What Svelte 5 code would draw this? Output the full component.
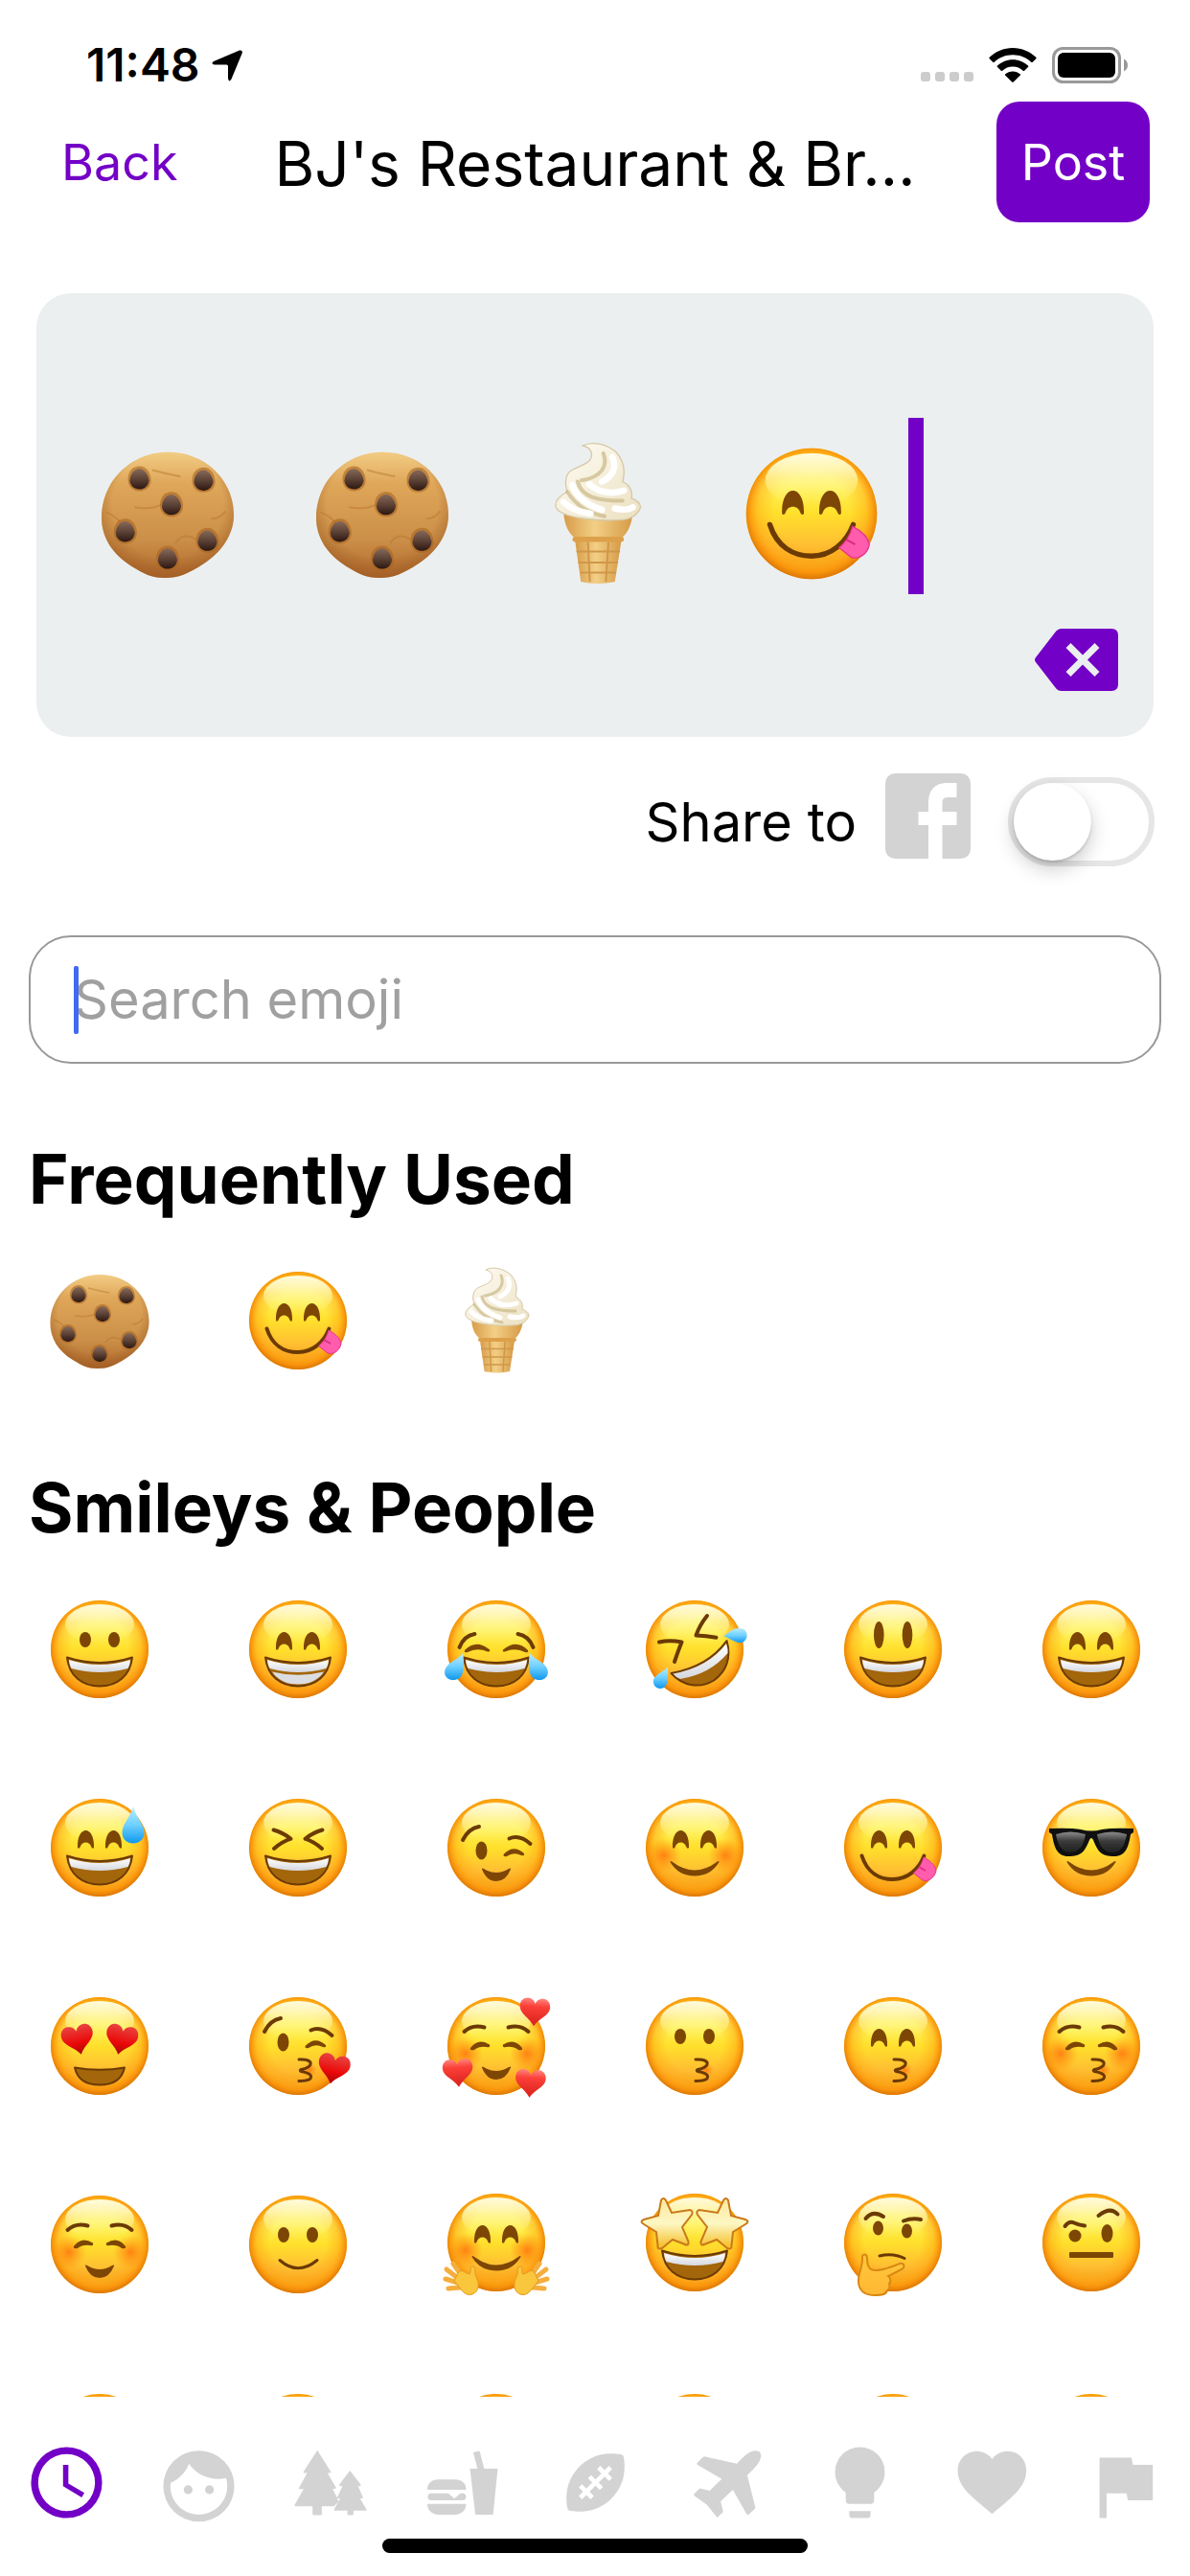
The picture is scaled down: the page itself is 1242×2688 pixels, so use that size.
<script>
	let message = $state(["cookie", "cookie", "icecream", "yum"]);
	let shareToFacebook = $state(false);
	let search = $state("");
	let activeTab = $state("Recent");

	// eyes, mouth, brows and extras pick the parts that the face snippet draws
	const faces = {
		grinning: { eyes: "dots", mouth: "grin" },
		beaming: { eyes: "arches", mouth: "teeth" },
		joy: { eyes: "joy", mouth: "grin", extra: "tears" },
		rofl: { eyes: "rofl", mouth: "rofl", extra: "roflTears" },
		smiley: { eyes: "tall", mouth: "grin" },
		smile: { eyes: "arches", mouth: "grin" },
		sweat: { eyes: "arches", mouth: "grin", extra: "drop" },
		laughing: { eyes: "squint", mouth: "grin" },
		wink: { eyes: "wink", mouth: "small" },
		blush: { eyes: "arches", mouth: "smile", cheeks: true },
		yum: { eyes: "arches", mouth: "yum" },
		sunglasses: { eyes: "glasses", mouth: "smile" },
		heartEyes: { eyes: "hearts", mouth: "open" },
		kissHeart: { eyes: "wink", lift: -7, mouth: "kiss", extra: "heart" },
		threeHearts: { eyes: "closed", mouth: "small", cheeks: true, extra: "hearts" },
		kissing: { eyes: "dots", mouth: "kiss" },
		kissingSmile: { eyes: "arches", mouth: "kiss" },
		kissingClosed: { eyes: "closed", mouth: "kiss", cheeks: true },
		relaxed: { eyes: "closed", mouth: "small", cheeks: true },
		slightSmile: { eyes: "dots", mouth: "slight" },
		hugging: { eyes: "arches", mouth: "smile", cheeks: true, up: 2, extra: "hands" },
		starStruck: { eyes: "none", mouth: "grin", up: 2, extra: "stars" },
		thinking: { eyes: "thinking", mouth: "doubt", up: 2, extra: "chin" },
		raisedBrow: { eyes: "raised", mouth: "flat", up: 2 },
		neutral: { eyes: "dots", mouth: "flat" },
		expressionless: { eyes: "closed", mouth: "flat" },
		rollingEyes: { eyes: "tall", mouth: "flat" },
		smirking: { eyes: "dots", mouth: "slight" },
		persevere: { eyes: "squint", mouth: "flat" },
		relieved: { eyes: "closed", mouth: "slight" },
	};

	const sections = [
		{ title: "Frequently Used", items: ["cookie", "yum", "icecream"] },
		{ title: "Smileys & People", items: Object.keys(faces) },
	];

	const tabs = [
		{
			name: "Recent",
			path: "M12 20A8 8 0 0 0 20 12 8 8 0 0 0 12 4 8 8 0 0 0 4 12 8 8 0 0 0 12 20M12 2A10 10 0 0 1 22 12 10 10 0 0 1 12 22C6.47 22 2 17.5 2 12A10 10 0 0 1 12 2M12.5 7V12.25L17 14.92L16.25 16.15L11 13V7H12.5Z",
		},
		{
			name: "Smileys",
			path: "M9 12.75A1.25 1.25 0 0 0 7.75 14A1.25 1.25 0 0 0 9 15.25A1.25 1.25 0 0 0 10.25 14A1.25 1.25 0 0 0 9 12.75M15 12.75A1.25 1.25 0 0 0 13.75 14A1.25 1.25 0 0 0 15 15.25A1.25 1.25 0 0 0 16.25 14A1.25 1.25 0 0 0 15 12.75M12 3A10 10 0 0 0 2 13A10 10 0 0 0 12 23A10 10 0 0 0 22 13A10 10 0 0 0 12 3M12 21C7.59 21 4 17.41 4 13C4 12.71 4 12.42 4.05 12.14C6.41 11.09 8.28 9.16 9.26 6.77C11.07 9.33 14.05 11 17.42 11C18.2 11 18.95 10.91 19.67 10.74C19.88 11.45 20 12.21 20 13C20 17.41 16.41 21 12 21Z",
		},
		{
			name: "Nature",
			path: "M8.14 2.9L12 9Q12.1 9.4 11 9.3L13.4 13.4Q13.5 13.8 12.4 13.8L14 16.7L13.6 16.9L14.4 17.1L12.8 18.7H9.4V20.9Q9.4 21.2 9.1 21.2H7.1Q6.8 21.2 6.8 20.9V18.7H1.9Q1.6 18.6 1.8 18.2L4.3 13.8H3.1Q2.8 13.7 3 13.4L5.3 9.3H4.4Q4.1 9.2 4.3 8.9ZM17.33 8.6L20.4 12.6Q20.5 13 19.6 13L21 16.2Q21.1 16.5 20.2 16.5L22 19.6Q22.1 19.9 21.8 19.9H18.3V20.9Q18.3 21.2 18 21.2H16.9Q16.6 21.2 16.6 20.9V19.9H13Q12.7 19.8 12.9 19.4L14.6 16.5Q13.6 16.5 13.8 16.1L15.2 13Q14.1 13 14.3 12.6Z",
		},
		{
			name: "Food",
			path: "M1.9 14V13.8C1.9 12.2 3.2 11.1 5 11.1H9.7C11.5 11.1 12.8 12.2 12.8 13.8V14ZM3 15H7.8L9.5 16.5L11.2 15H11.8A1 1 0 0 1 11.8 17H3A1 1 0 0 1 3 15ZM1.9 18H12.8C12.8 19.8 11.5 21 9.7 21H5C3.2 21 1.9 19.8 1.9 18ZM13.9 8.1H16L14.8 3.5L16.6 3.1L17.9 8.1H21.7L20.4 21H15.4Z",
		},
		{
			name: "Activity",
			path: "M7.5 7.5C9.17 5.87 11.29 4.69 13.37 4.18C15.46 3.67 17.5 3.83 18.6 4C19.71 4.15 19.87 4.31 20.03 5.41C20.18 6.5 20.33 8.55 19.82 10.63C19.31 12.71 18.13 14.83 16.5 16.5C14.83 18.13 12.71 19.31 10.63 19.82C8.55 20.33 6.5 20.18 5.41 20.03C4.31 19.87 4.15 19.71 4 18.6C3.83 17.5 3.67 15.46 4.18 13.37C4.69 11.29 5.87 9.17 7.5 7.5M7.3 15.79L8.21 16.7L9.42 15.5L10.63 16.7L11.54 15.79L10.34 14.58L12 12.91L13.21 14.12L14.12 13.21L12.91 12L14.58 10.34L15.79 11.54L16.7 10.63L15.5 9.42L16.7 8.21L15.79 7.3L14.58 8.5L13.37 7.3L12.46 8.21L13.66 9.42L12 11.09L10.79 9.88L9.88 10.79L11.09 12L9.42 13.66L8.21 12.46L7.3 13.37L8.5 14.58L7.3 15.79Z",
		},
		{
			name: "Travel",
			path: "M14.6 6.7C16.5 4.6 18 3.1 20 3.05Q21.3 3.1 21.4 4.4C21.3 6.2 19.7 8 17.5 9.9L19.75 18.9Q19.8 19.2 19.6 19.4L17.9 21Q17.5 21.2 17.3 20.8L13.45 14L10 17.35L10.7 20Q10.7 20.3 10.5 20.5L9.2 21.7Q9 21.9 8.8 21.6L6.1 18.2L2.6 15.7Q2.4 15.4 2.6 15.2L3.9 13.8Q4.1 13.6 4.4 13.7L6.9 14.3L10.35 11L3.5 7Q3.2 6.8 3.4 6.5L5.1 4.8Q5.4 4.6 5.7 4.7Z",
		},
		{
			name: "Objects",
			path: "M12 2A7 7 0 0 0 5 9C5 11.38 6.19 13.47 8 14.74V17A1 1 0 0 0 9 18H15A1 1 0 0 0 16 17V14.74C17.81 13.47 19 11.38 19 9A7 7 0 0 0 12 2M9 21A1 1 0 0 0 10 22H14A1 1 0 0 0 15 21V20H9V21Z",
		},
		{
			name: "Symbols",
			path: "M12 20.8C7 16.5 2.3 13.5 2.3 8.6C2.3 5.5 4.6 3.2 7.6 3.2C9.3 3.2 11 4 12 5.4C13 4 14.7 3.2 16.4 3.2C19.4 3.2 21.6 5.5 21.6 8.6C21.6 13.5 17 16.5 12 20.8Z",
		},
		{ name: "Flags", path: "M14.4 7L14 5H5V22H7V15H12.6L13 17H20V7Z" },
	];

	function addEmoji(name) {
		message = [...message, name];
	}

	function removeLast() {
		message = message.slice(0, -1);
	}
</script>

{#snippet heart(x, y, turn, size, fill)}
	<path
		transform={`translate(${x} ${y}) rotate(${turn}) scale(${size})`}
		fill={`url(#${fill})`}
		d="M0 16C-5 7-17 3-17-6C-17-12-13-15.500-8.500-15.500C-4-15.500-1-12.500 0-9C1-12.500 4-15.500 8.500-15.500C13-15.500 17-12 17-6C17 3 5 7 0 16Z"
	/>
{/snippet}

{#snippet face(f)}
	<g transform={`translate(0 ${f.up ? -f.up : 0})`}>
		<circle cx="56" cy="56" r="51" fill="url(#skin)" />
		<circle cx="56" cy="56" r="51" fill="url(#rim)" />
		<ellipse cx="56" cy="30" rx="36" ry="21" fill="url(#shine)" />
		{#if f.cheeks}
			<circle cx="24" cy="64" r="18" fill="url(#cheek)" />
			<circle cx="88" cy="64" r="18" fill="url(#cheek)" />
		{/if}

		{#if f.eyes === "dots"}
			<ellipse class="eye" cx="41" cy="46" rx="6" ry="8" />
			<ellipse class="eye" cx="71" cy="46" rx="6" ry="8" />
		{:else if f.eyes === "tall"}
			<ellipse class="eye" cx="41.300" cy="41" rx="5.300" ry="14" />
			<ellipse class="eye" cx="71" cy="41" rx="5.300" ry="14" />
		{:else if f.eyes === "arches"}
			<path class="eye" d="M33 56C32 32 51 32 50 56Q48.500 58 47.200 55C45.500 49 37.500 49 35.800 55Q34.500 58 33 56Z" />
			<path class="eye" d="M62 56C61 32 80 32 79 56Q77.500 58 76.200 55C74.500 49 66.500 49 64.800 55Q63.500 58 62 56Z" />
		{:else if f.eyes === "joy"}
			<path class="brow" d="M17.500 54Q22 42 33.500 40" />
			<path class="brow" d="M94.500 54Q90 42 78.500 40" />
			<path class="eye" d="M23 57Q35 45 49 56.500Q50 59 47 58.500Q36 54 26 59Q22 60 23 57Z" />
			<path class="eye" d="M89 57Q77 45 63 56.500Q62 59 65 58.500Q76 54 86 59Q90 60 89 57Z" />
		{:else if f.eyes === "rofl"}
			<path class="squint" d="M19 48.500Q30 46 42.500 48.500Q39 57 35 69" />
			<path class="squint" d="M69 21Q61 31 57.500 41.500Q68 42 78.500 43.700" />
		{:else if f.eyes === "squint"}
			<path class="squint" d="M30.500 37.500Q40 40 48.500 46.700Q39 50 31 57" />
			<path class="squint" d="M81.500 37.500Q72 40 63.500 46.700Q73 50 81 57" />
		{:else if f.eyes === "wink"}
			<g transform={`translate(0 ${f.lift ?? 0})`}>
				<path class="brow" d="M21 48Q27 36 38 34" />
				<path class="brow" d="M69.500 46.500Q80 42 91.500 52" />
				<ellipse class="eye" cx="40.500" cy="59" rx="6" ry="9.500" />
				<path class="eye" d="M63.500 63Q74 52 85 62Q86 65 82 64Q74 60 67 65Q63 66 63.500 63Z" />
			</g>
		{:else if f.eyes === "closed"}
			<path class="brow" d="M22.500 41Q31 33 43.500 36.500" />
			<path class="brow" d="M89.500 41Q81 33 68.500 36.500" />
			<path class="eye" d="M29 58Q37 47 49 54.500Q50 58 46 57Q38 56 33 60Q28 61 29 58Z" />
			<path class="eye" d="M83 58Q75 47 63 54.500Q62 58 66 57Q74 56 79 60Q84 61 83 58Z" />
		{:else if f.eyes === "hearts"}
			{@render heart(33.5, 49.5, -12, 0.98, "redHeart")}
			{@render heart(78.5, 49.5, 12, 0.98, "redHeart")}
		{:else if f.eyes === "thinking"}
			<path class="brow" d="M27.500 31Q35 22 46 29" />
			<path class="brow" d="M67 33.500Q76 30 85 32" />
			<ellipse class="eye" cx="40.500" cy="41" rx="5.500" ry="7.500" />
			<ellipse class="eye" cx="70.500" cy="44" rx="5.500" ry="7.500" />
		{:else if f.eyes === "raised"}
			<path class="brow" d="M28.500 39Q33 33 38 35.500T49 38.500" />
			<path class="brow" d="M63.500 28Q76 18 83.500 26.500" />
			<circle class="eye" cx="39" cy="49" r="6.500" />
			<ellipse class="eye" cx="72.500" cy="46.500" rx="6" ry="9.500" />
		{:else if f.eyes === "glasses"}
			<path fill="#101010" d="M12 36Q34 35 45 37Q56 40 67 37Q78 35 100 36V40L97 42C95 55 92 65 80 65C66 65 63 60 58 48Q56 44 54 48C49 60 46 65 32 65C20 65 17 55 15 42L12 40Z" />
			<path fill="url(#lens)" d="M19 42Q34 37 50 42Q47 61 34 61Q22 61 19 42Z" />
			<path fill="url(#lens)" d="M93 42Q78 37 62 42Q65 61 78 61Q90 61 93 42Z" />
		{/if}

		{#if f.mouth === "grin" || f.mouth === "teeth"}
			<path class="mouth" d="M22 64.500Q56 75.500 90 64.500C88 84 74 94.500 56 94.500C38 94.500 24 84 22 64.500Z" />
			<path fill="url(#tooth)" d="M24 67Q56 77 88 67Q87.500 73 85.500 76Q56 84 26.500 76Q24.500 73 24 67Z" />
			{#if f.mouth === "teeth"}
				<path fill="#dcdde3" d="M29 79.500Q56 86 83 79.500Q74 92.500 56 92.500Q38 92.500 29 79.500Z" />
			{/if}
		{:else if f.mouth === "rofl"}
			<path class="mouth" d="M31.500 81Q70 74 89.500 47C95 66 88 80 76 88.500C62 97 44 95 31.500 81Z" />
			<path fill="url(#tooth)" d="M33.500 81.500Q70 75 89 50Q91 56 90.500 60Q72 82 41 87Q36 85 33.500 81.500Z" />
		{:else if f.mouth === "small"}
			<path class="eye" d="M41 78.500Q40.500 77 43 78Q56 86 69 78Q71.500 77 71 78.500Q66 91 56 91Q46 91 41 78.500Z" />
		{:else if f.mouth === "smile"}
			<path class="eye" d="M30.500 71Q30.500 69 33 71Q56 88 79 71Q81.500 69 81.500 71Q73 85.500 56 85.500Q39 85.500 30.500 71Z" />
		{:else if f.mouth === "yum"}
			<path class="line" d="M23.500 64.500C29 82 42 89 56 89C71 89 83 79 88.500 64.500" />
			<path fill="#ff5cae" stroke="#e8358c" d="M88 66C94 69 100 74 101 80C100 87 93 92 87 90L77.500 82.500C83 78 86 73 88 66Z" />
			<path fill="none" stroke="#d92c80" stroke-width="1.500" d="M83 76L90 80" />
		{:else if f.mouth === "open"}
			<path class="mouth" d="M30 78.500Q56 83 82 78.500Q78 96.500 56 96.500Q34 96.500 30 78.500Z" />
		{:else if f.mouth === "kiss"}
			<circle cx="68" cy="81" r="8" fill="url(#cheek)" />
			<path class="thin" d="M57 70C74 69 72 79 59 80.500C58 81 58 82 59 82.500C73 84 74 93 57 92.500" />
		{:else if f.mouth === "slight"}
			<path class="thin" d="M37 72.500Q56 89 76 72.500" />
		{:else if f.mouth === "doubt"}
			<path class="thin" d="M42 70Q56 66.500 68 72.500" />
		{:else if f.mouth === "flat"}
			<rect class="eye" x="33" y="66" width="46" height="6" rx="1" />
		{/if}
	</g>

	{#if f.extra === "tears"}
		<path class="tear" d="M21 60C24 78 21 88 11 88C3 88-1 80 5 73C9 68 17 66 21 60Z" />
		<path class="tear" d="M91 60C88 78 91 88 101 88C109 88 113 80 107 73C103 68 95 66 91 60Z" />
	{:else if f.extra === "roflTears"}
		<path class="tear" d="M86.500 42.500C94 35 101 32.500 107 35C113 39 111 47 105 49C99 50 94 45 86.500 42.500Z" />
		<path class="tear" d="M28 74.500C28 85 29 92 24 96C18 99 12 95 13 88C15 82 23 80 28 74.500Z" />
	{:else if f.extra === "drop"}
		<path class="tear" d="M91 13C93 23 102.500 31 102.500 40.500C102.500 47 97.500 51.500 91 51.500C84.500 51.500 79.500 47 79.500 40.500C79.500 31 89 23 91 13Z" />
	{:else if f.extra === "heart"}
		{@render heart(93, 80, 12, 0.98, "redHeart")}
	{:else if f.extra === "hearts"}
		{@render heart(96, 20.5, 4, 0.93, "pinkHeart")}
		{@render heart(16, 84, -4, 0.93, "pinkHeart")}
		{@render heart(91.5, 95, 4, 0.93, "pinkHeart")}
	{:else if f.extra === "stars"}
		<path class="star" d="M21 10Q23 6 26 10L32 23L51 20Q55 21 53 25L43 38L49.500 53Q50 58 46 56L33 51L22 60Q17 62 17.500 57L16 43L3 35Q-2 32 3 30L18 26Z" />
		<path class="star" d="M91 10Q89 6 86 10L80 23L61 20Q57 21 59 25L69 38L62.500 53Q62 58 66 56L79 51L90 60Q95 62 94.500 57L96 43L109 35Q114 32 109 30L94 26Z" />
	{:else if f.extra === "hands"}
		{#each [1, -1] as side}
			<g transform={side === 1 ? "" : "translate(112 0) scale(-1 1)"}>
				<path class="finger" d="M20 89L11 76M17 92L4 82M16 96L3 92M18 101L6 102" />
				<path class="palm" d="M31 79C28 78 30 86 28 87C25 87 21 82 17 84L12 94L20 104Q25 110 31 108C39 105 38 95 35 90Q33 85 34 82Q34 79 31 79Z" />
			</g>
		{/each}
	{:else if f.extra === "chin"}
		<path class="hand" d="M24 68C26 65 29 67 29 70C29 76 30 80 33 82C41 85 53 80 63 76C68 75 69 80 65 82L51 89C54 91 54 95 52 97C53 100 52 103 50 104C49 108 45 109 37 109C27 109 21 105 20 96C19 86 25 80 24 68Z" />
	{/if}
{/snippet}

{#snippet emoji(name)}
	<svg class="emoji" viewBox="0 0 112 112" aria-hidden="true">
		{#if name === "cookie"}
			<path fill="url(#dough)" d="M56 8C86 8 107 30 107.500 56C108 72 98 86 84 95C72 103 64 106 54 106C43 106 38 103 28 97C13 88 4 74 4.500 58C5 30 28 8 56 8Z" />
			<path fill="url(#doughEdge)" d="M56 8C86 8 107 30 107.500 56C108 72 98 86 84 95C72 103 64 106 54 106C43 106 38 103 28 97C13 88 4 74 4.500 58C5 30 28 8 56 8Z" />
			<path fill="none" stroke="#b9782f" stroke-opacity="0.500" stroke-width="1.500" d="M44 22Q55 25 66 27M30 51Q44 53 51 49M8 55Q16 58 20 64M62 79Q68 70 78 76M90 60Q97 60 101 54" />
			{#each [[34, 29], [84, 30], [59, 49], [23, 70], [87, 77], [56, 91]] as [x, y]}
				<path transform={`translate(${x} ${y})`} fill="#a8641f" fill-opacity="0.600" d="M0-10C6-10 9-4 9 1C9 7 4 9.500 0 9.500C-6 9.500-9 5-9 0C-9-6-5-10 0-10Z" />
				<path transform={`translate(${x} ${y})`} fill="url(#chip)" d="M0-8C4-8 7-3 7.500 1C7 6 3 8 0 8C-5 8-7.500 4-7.500 1C-7-4-4-8 0-8Z" />
			{/each}
		{:else if name === "icecream"}
			<path fill="url(#cone)" d="M30 55H84C83 66 79 72 75 75H39C34 71 31 66 30 55Z" />
			<path fill="url(#cone)" d="M39 77H75L70 109Q56 112 43.500 109Z" />
			<path fill="none" stroke="#cf9848" stroke-width="1.500" d="M40 85.500H74M41.500 94H72.500M43 102H71M49 78L50.500 109M65 78L63 109" />
			<rect x="37" y="74" width="40" height="4" rx="2" fill="#dda04a" />
			<path fill="url(#cream)" stroke="#d7c8a8" d="M45 3C53-1 64 2 71 8C78 16 78 24 76 31C82 34 84 38 83 44C88 46 90 48 90 51C88 57 82 61 73 61C52 62 28 59 24 51C23 46 27 42 33 39C32 35 31 33 32 29C33 20 43 21 50 15C53 11 53 5 45 3Z" />
			<path fill="none" stroke="#c9b887" stroke-opacity="0.700" stroke-width="3" stroke-linecap="round" d="M61 9C65 19 59 28 44 30M41 31C44 43 56 46 76 46M33 39C40 50 50 56 62 58" />
			<path fill="none" stroke="#fff" stroke-width="5" stroke-linecap="round" d="M68 12C72 20 68 27 60 31M50 33C58 40 68 41 77 38M37 34C40 43 48 49 60 53M30 47C36 53 44 55 51 56M70 52Q80 54 84 51" />
		{:else}
			{@render face(faces[name])}
		{/if}
	</svg>
{/snippet}

<!-- gradients shared by all the emoji -->
<svg class="defs" aria-hidden="true">
	<defs>
		<linearGradient id="skin" x1="0" y1="0" x2="0" y2="1">
			<stop offset="0" stop-color="#ffdc28" />
			<stop offset="0.280" stop-color="#fff25a" />
			<stop offset="0.500" stop-color="#ffe02c" />
			<stop offset="0.750" stop-color="#ffbd32" />
			<stop offset="1" stop-color="#f39a12" />
		</linearGradient>
		<radialGradient id="rim" cx="0.500" cy="0.480" r="0.520">
			<stop offset="0.550" stop-color="#ffa50f" stop-opacity="0" />
			<stop offset="0.800" stop-color="#ffa010" stop-opacity="0.450" />
			<stop offset="0.900" stop-color="#fb940a" stop-opacity="0.850" />
			<stop offset="1" stop-color="#db7606" />
		</radialGradient>
		<linearGradient id="shine" x1="0" y1="0" x2="0" y2="1">
			<stop offset="0" stop-color="#fffce0" />
			<stop offset="0.300" stop-color="#fffbc4" stop-opacity="0.850" />
			<stop offset="1" stop-color="#fff56e" stop-opacity="0" />
		</linearGradient>
		<radialGradient id="cheek">
			<stop offset="0" stop-color="#ff7a10" stop-opacity="0.900" />
			<stop offset="1" stop-color="#ff8a10" stop-opacity="0" />
		</radialGradient>
		<linearGradient id="tooth" x1="0" y1="0" x2="0" y2="1">
			<stop offset="0" stop-color="#fff" />
			<stop offset="1" stop-color="#d5d7de" />
		</linearGradient>
		<linearGradient id="tear" x1="0" y1="0" x2="0" y2="1">
			<stop offset="0" stop-color="#b9edff" />
			<stop offset="0.500" stop-color="#6fd0ff" />
			<stop offset="1" stop-color="#0f98ee" />
		</linearGradient>
		<linearGradient id="redHeart" x1="0" y1="0" x2="0" y2="1">
			<stop offset="0" stop-color="#e84442" />
			<stop offset="0.600" stop-color="#ea0808" />
			<stop offset="1" stop-color="#a80606" />
		</linearGradient>
		<linearGradient id="pinkHeart" x1="0" y1="0" x2="0" y2="1">
			<stop offset="0" stop-color="#ff8580" />
			<stop offset="0.300" stop-color="#fb4038" />
			<stop offset="1" stop-color="#d81f1c" />
		</linearGradient>
		<linearGradient id="lens" x1="0" y1="0" x2="0" y2="1">
			<stop offset="0" stop-color="#8c8c8c" />
			<stop offset="0.450" stop-color="#3a3a3a" />
			<stop offset="1" stop-color="#202020" />
		</linearGradient>
		<linearGradient id="star" x1="0" y1="0" x2="0" y2="1">
			<stop offset="0" stop-color="#ffe89a" />
			<stop offset="0.500" stop-color="#fdf7c4" />
			<stop offset="1" stop-color="#f5bb1c" />
		</linearGradient>
		<linearGradient id="hand" x1="0" y1="0" x2="0" y2="1">
			<stop offset="0" stop-color="#ffc93a" />
			<stop offset="1" stop-color="#ffb733" />
		</linearGradient>
		<linearGradient id="dough" x1="0" y1="0" x2="0" y2="1">
			<stop offset="0" stop-color="#f2cc84" />
			<stop offset="0.250" stop-color="#dfa75a" />
			<stop offset="0.700" stop-color="#cb8f48" />
			<stop offset="1" stop-color="#b06a2e" />
		</linearGradient>
		<radialGradient id="doughEdge" cx="0.500" cy="0.420" r="0.600">
			<stop offset="0.700" stop-color="#9c5820" stop-opacity="0" />
			<stop offset="1" stop-color="#9c5820" stop-opacity="0.700" />
		</radialGradient>
		<linearGradient id="chip" x1="0" y1="0" x2="0" y2="1">
			<stop offset="0" stop-color="#86695a" />
			<stop offset="0.500" stop-color="#5d4236" />
			<stop offset="1" stop-color="#2c1710" />
		</linearGradient>
		<linearGradient id="cone" x1="0" y1="0" x2="1" y2="0">
			<stop offset="0" stop-color="#d79c48" />
			<stop offset="0.450" stop-color="#f3cf86" />
			<stop offset="1" stop-color="#d59a46" />
		</linearGradient>
		<linearGradient id="cream" x1="0" y1="0" x2="1" y2="1">
			<stop offset="0" stop-color="#fffdf6" />
			<stop offset="1" stop-color="#ebe0c0" />
		</linearGradient>
	</defs>
</svg>

<div class="app">
	<div class="status-bar">
		<div class="status-left">
			<span class="time">11:48</span>
			<svg class="location" viewBox="0 0 32 33" aria-hidden="true">
				<path d="M29 .5Q33 0 31.500 4L20.500 30.500Q18 34.500 17 30V17Q17 15.500 15.500 15.500H3Q-1.500 14.500 2 12Z" />
			</svg>
		</div>
		<div class="status-right">
			<div class="signal"><i></i><i></i><i></i><i></i></div>
			<svg class="wifi" viewBox="0 0 50 36" aria-hidden="true">
				<path d="M25 0C34.500 0 43 3.800 49.300 9.800Q50 10.600 49.300 11.300L45.800 14.800Q45 15.500 44.200 14.800C39 10 32.500 7.300 25 7.300S11 10 5.800 14.800Q5 15.500 4.200 14.800L.7 11.300Q0 10.600.7 9.800C7 3.800 15.500 0 25 0ZM25 12.200C31.300 12.200 36.900 14.700 41 18.500Q41.700 19.300 41 20L37.200 23.700Q36.500 24.300 35.700 23.700C32.900 21.100 29.300 19.500 25 19.500S17.100 21.100 14.300 23.700Q13.500 24.300 12.800 23.700L9 20Q8.300 19.300 9 18.500C13.100 14.700 18.700 12.200 25 12.200ZM25 24.500C28 24.500 30.700 25.600 32.700 27.300Q33.400 28 32.700 28.800L25.800 35.500Q25 36.200 24.200 35.500L17.300 28.800Q16.600 28 17.300 27.300C19.300 25.600 22 24.500 25 24.500Z" />
			</svg>
			<svg class="battery" viewBox="0 0 80 38" aria-hidden="true">
				<rect x="1.500" y="1.500" width="69" height="35" rx="10" fill="#fff" stroke="#999" stroke-width="3" />
				<rect x="6" y="6" width="60" height="26" rx="6" />
				<path fill="#999" d="M75 12.500Q79 14.500 79 19T75 25.500Z" />
			</svg>
		</div>
	</div>

	<header class="header">
		<button type="button" class="back-btn">Back</button>
		<h1 class="title">BJ's Restaurant &amp; Br…</h1>
		<button type="button" class="post-btn">Post</button>
	</header>

	<section class="composer">
		<div class="message">
			{#each message as name}
				<div class="message-emoji">{@render emoji(name)}</div>
			{/each}
			<span class="message-caret"></span>
		</div>
		<button type="button" class="delete-btn" aria-label="Delete" onclick={removeLast}>
			<svg viewBox="0 0 87 65" aria-hidden="true">
				<path fill="#7300c6" d="M28 0H80Q87 0 87 7V58Q87 65 80 65H28Q24 65 21.500 61.500L1 35Q-1 32.500 1 30L21.500 3.500Q24 0 28 0Z" />
				<path stroke="#ebeff0" stroke-width="7" d="M35 17.500L65 47.500M65 17.500L35 47.500" />
			</svg>
		</button>
	</section>

	<div class="share-row">
		<label for="share">Share to</label>
		<svg class="facebook" viewBox="0 0 89 89" aria-hidden="true">
			<rect width="89" height="89" rx="10" fill="#d3d3d3" />
			<path fill="#fff" d="M45 89V54H34.500V40H45V29Q46 11 63 10H74.500V25H65Q59.500 25 59.500 30V40H74.500V54H59.500V89Z" />
		</svg>
		<input id="share" class="toggle" type="checkbox" role="switch" bind:checked={shareToFacebook} />
	</div>

	<div class="search">
		<input type="text" placeholder="Search emoji" aria-label="Search emoji" bind:value={search} />
		<span class="search-caret"></span>
	</div>

	<main class="list">
		{#each sections as section}
			<section>
				<h2>{section.title}</h2>
				<div class="grid">
					{#each section.items as name}
						<button type="button" class="emoji-btn" aria-label={name} onclick={() => addEmoji(name)}>
							{@render emoji(name)}
						</button>
					{/each}
				</div>
			</section>
		{/each}
	</main>

	<footer class="footer">
		<nav class="tabs">
			{#each tabs as tab}
				<button
					type="button"
					class="tab"
					class:active={tab.name === activeTab}
					aria-label={tab.name}
					onclick={() => (activeTab = tab.name)}
				>
					<svg viewBox="0 0 24 24" aria-hidden="true"><path fill-rule="evenodd" d={tab.path} /></svg>
				</button>
			{/each}
		</nav>
		<div class="home-indicator"></div>
	</footer>
</div>

<style>
:global(body) {
	margin: 0;
	background: #fff;
}

.app {
	display: flex;
	flex-direction: column;
	height: 100vh;
	overflow: hidden;
	color: #000;
	font-family: Inter, "Liberation Sans", sans-serif;
}

button {
	padding: 0;
	border: none;
	background: none;
	font-family: inherit;
	cursor: pointer;
}

svg {
	display: block;
}

.defs {
	position: absolute;
	width: 0;
	height: 0;
}

/* Status bar */
.status-bar {
	display: flex;
	justify-content: space-between;
	align-items: center;
	flex: none;
	height: 106px;
	padding: 30px 64px 0 90px;
	box-sizing: border-box;
}

.status-left,
.status-right {
	display: flex;
	align-items: center;
	gap: 16px;
}

.status-left {
	gap: 12px;
}

.time {
	font-size: 48px;
	font-weight: 600;
	line-height: 56px;
}

.location {
	width: 32px;
	height: 33px;
}

.signal {
	display: flex;
	gap: 5px;
	padding-top: 24px;
}

.signal i {
	width: 10px;
	height: 10px;
	border-radius: 3px;
	background: #ccc;
}

.wifi {
	width: 50px;
	height: 36px;
}

.battery {
	width: 80px;
	height: 38px;
}

/* Header */
.header {
	display: grid;
	grid-template-columns: 1fr auto 1fr;
	align-items: center;
	flex: none;
	padding: 0 42px;
}

.back-btn {
	justify-self: start;
	padding-left: 22px;
	color: #7300c6;
	font-size: 52px;
}

.title {
	margin: 0;
	padding-top: 4px;
	font-size: 64px;
	font-weight: 400;
	line-height: 80px;
	white-space: nowrap;
}

.post-btn {
	justify-self: end;
	width: 160px;
	height: 126px;
	border-radius: 24px;
	background: #7300c6;
	color: #fff;
	font-size: 52px;
}

/* Composer */
.composer {
	display: flex;
	flex-direction: column;
	flex: none;
	margin: 74px 38px 0;
	padding: 130px 37px 48px 62px;
	border-radius: 36px;
	background: #ebeff0;
}

.message {
	display: flex;
	align-items: center;
	gap: 74px;
}

.message-emoji {
	width: 150px;
	height: 150px;
	padding-top: 16px;
}

.message-caret {
	width: 16px;
	height: 184px;
	margin-left: -48px;
	background: #7300c6;
}

.emoji {
	width: 100%;
	height: 100%;
	overflow: visible;
}

.delete-btn {
	align-self: flex-end;
	width: 87px;
	height: 65px;
	margin-top: 36px;
}

/* Share */
.share-row {
	display: flex;
	justify-content: flex-end;
	align-items: flex-end;
	flex: none;
	height: 97px;
	margin: 38px 37px 0;
}

.share-row label {
	font-size: 56px;
	line-height: 92px;
}

.facebook {
	align-self: flex-start;
	width: 89px;
	height: 89px;
	margin: 0 39px 0 30px;
}

.toggle {
	appearance: none;
	width: 153px;
	height: 93px;
	margin: 0;
	border: 6px solid #e6e6e6;
	border-radius: 999px;
	box-sizing: border-box;
	background: #fff;
	cursor: pointer;
}

.toggle::before {
	content: "";
	display: block;
	width: 81px;
	height: 81px;
	border-radius: 50%;
	background: #fff;
	box-shadow: 0 9px 20px rgba(0, 0, 0, 0.2), 0 2px 3px rgba(0, 0, 0, 0.15);
	transition: margin-left 0.2s;
}

.toggle:checked {
	border-color: #7300c6;
	background: #7300c6;
}

.toggle:checked::before {
	margin-left: 60px;
}

/* Search */
.search {
	position: relative;
	flex: none;
	margin: 72px 30px 0;
}

.search input {
	display: block;
	width: 100%;
	height: 134px;
	padding: 0 45px;
	border: 2px solid #999;
	border-radius: 44px;
	box-sizing: border-box;
	background: #fff;
	font-family: inherit;
	font-size: 56px;
	outline: none;
}

.search input::placeholder {
	color: #a0a0a0;
	opacity: 1;
}

.search-caret {
	position: absolute;
	top: 32px;
	left: 47px;
	width: 5px;
	height: 71px;
	border-radius: 2px;
	background: #4169f0;
}

/* Emoji list */
.list {
	flex: 1;
	min-height: 0;
	overflow: hidden;
	padding-top: 28px;
}

h2 {
	margin: 0;
	padding: 48px 30px 0;
	font-size: 71px;
	font-weight: 700;
	line-height: 88px;
}

.grid {
	display: grid;
	grid-template-columns: repeat(6, 1fr);
}

.emoji-btn {
	display: grid;
	place-items: center;
	height: 207px;
}

.emoji-btn .emoji {
	width: 112px;
	height: 112px;
}

.eye {
	fill: #7d4605;
}

.mouth {
	fill: #a3660a;
	stroke: #6b3a05;
	stroke-width: 2;
	stroke-linejoin: round;
}

.brow,
.line,
.thin,
.squint {
	fill: none;
	stroke: #6b3a05;
	stroke-width: 4;
	stroke-linecap: round;
	stroke-linejoin: round;
}

.thin {
	stroke-width: 3;
}

.tear {
	fill: url(#tear);
}

.star {
	fill: url(#star);
	stroke: #c9781a;
	stroke-width: 2;
}

.finger {
	fill: none;
	stroke: #f5ae3c;
	stroke-width: 5;
	stroke-linecap: round;
}

.palm {
	fill: #fac63c;
	stroke: #e39a22;
	stroke-width: 1;
}

.hand {
	fill: url(#hand);
	stroke: #d98714;
	stroke-width: 2;
}

/* Footer */
.footer {
	flex: none;
	padding: 45px 0 24px;
	background: #fff;
}

.tabs {
	display: grid;
	grid-template-columns: repeat(9, 1fr);
}

.tab {
	display: grid;
	place-items: center;
	color: #d3d3d3;
}

.tab svg {
	width: 89px;
	height: 89px;
	fill: currentColor;
}

.tab.active {
	color: #7300c6;
}

.home-indicator {
	width: 444px;
	height: 15px;
	margin: 14px auto 0;
	border-radius: 8px;
	background: #000;
}
</style>
